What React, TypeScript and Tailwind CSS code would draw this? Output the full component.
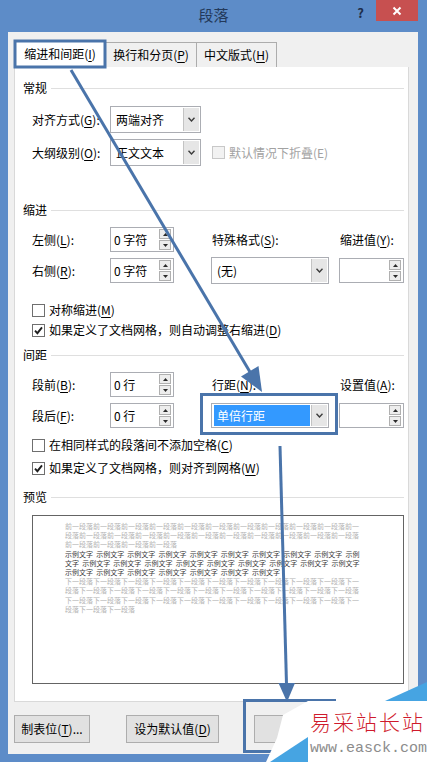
import type { ReactNode } from "react";

// accelerator key, e.g. (G) with the letter underlined
function Acc({ k }: { k: string }) {
  return (
    <>
      (<span className="underline underline-offset-2">{k}</span>)
    </>
  );
}

function Section({ title }: { title: string }) {
  return (
    <div className="flex items-center gap-[4px] h-4">
      <span className="leading-4">{title}</span>
      <div className="flex-1 h-px bg-[#dfdfdf]" />
    </div>
  );
}

function Check({ checked = false, disabled = false }: { checked?: boolean; disabled?: boolean }) {
  return (
    <span
      className={
        disabled
          ? "w-[13px] h-[13px] shrink-0 border border-[#c8c8c8] bg-[#f2f2f2] flex items-center justify-center"
          : "w-[13px] h-[13px] shrink-0 border border-[#6f6f6f] bg-white flex items-center justify-center"
      }
    >
      {checked && (
        <svg width="9" height="9" viewBox="0 0 9 9">
          <path d="M1 4.6 L3.4 7.2 L8 1.4" stroke="#1f1f1f" strokeWidth="1.9" fill="none" />
        </svg>
      )}
    </span>
  );
}

function Chevron() {
  return (
    <svg width="7" height="5" viewBox="0 0 7 5">
      <path d="M0.5 0.8 L3.5 4 L6.5 0.8" stroke="#3c3c3c" strokeWidth="1.4" fill="none" />
    </svg>
  );
}

function Combo({ value, w, selected = false, h = "h-[27px]" }: { value: string; w: string; selected?: boolean; h?: string }) {
  return (
    <div className={`${w} ${h} shrink-0 bg-white border border-[#abadb3] flex p-px`}>
      <div className="flex-1 flex items-center pl-px pr-px">
        <span
          className={
            selected
              ? "h-full w-full flex items-center pl-[3px] bg-[#3399ff] text-white"
              : "h-full w-full flex items-center pl-[3px]"
          }
        >
          {value}
        </span>
      </div>
      <div className="w-[16px] bg-[#e6e6e6] border-l border-[#c3c3c3] flex items-center justify-center">
        <Chevron />
      </div>
    </div>
  );
}

function Spin({ value, w }: { value: string; w: string }) {
  return (
    <div className={`${w} h-[25px] shrink-0 bg-white border border-[#abadb3] flex items-center justify-between pl-[3px] pr-[2px]`}>
      <span>{value}</span>
      <div className="flex flex-col gap-px">
        <span className="w-[12px] h-[10px] border border-[#b0b0b0] bg-[#ededed] flex items-center justify-center">
          <svg width="5" height="3" viewBox="0 0 5 3">
            <path d="M0 3 L2.5 0 L5 3Z" fill="#2a2a2a" />
          </svg>
        </span>
        <span className="w-[12px] h-[10px] border border-[#b0b0b0] bg-[#ededed] flex items-center justify-center">
          <svg width="5" height="3" viewBox="0 0 5 3">
            <path d="M0 0 L2.5 3 L5 0Z" fill="#2a2a2a" />
          </svg>
        </span>
      </div>
    </div>
  );
}

function Label({ w, children }: { w: string; children: ReactNode }) {
  return <span className={`${w} shrink-0 text-black`}>{children}</span>;
}

function Gap({ w }: { w: string }) {
  return <span className={`${w} shrink-0`} />;
}

function Btn({ w, children }: { w: string; children: ReactNode }) {
  return (
    <div className={`${w} h-[28px] shrink-0 border border-[#adadad] bg-[#e1e1e1] flex items-center justify-center`}>
      {children}
    </div>
  );
}

const before = "前一段落".repeat(25);
const sample = "示例文字 ".repeat(26).trim();
const after = "下一段落".repeat(34);

export default function App() {
  return (
    <div className="relative w-[427px] h-[762px] overflow-hidden bg-[#5d8cc8] text-[12px] leading-4 text-black font-[family-name:'Noto_Sans_CJK_SC',sans-serif]">
      {/* title bar */}
      <div className="h-[32px] grid grid-cols-[1fr_auto_1fr]">
        <div />
        <div className="flex items-center text-[15px] text-[#23395a] pb-[2px]">段落</div>
        <div className="flex justify-end items-start">
          <span className="mt-[5px] mr-[12px] text-[13px] font-bold text-[#1d2e4b]">?</span>
          <div className="w-[42px] h-[21px] mr-[9px] bg-[#c75050] flex items-center justify-center">
            <svg width="10" height="10" viewBox="0 0 10 10">
              <path d="M1.5 1.5 L8.5 8.5 M8.5 1.5 L1.5 8.5" stroke="#fff" strokeWidth="2" />
            </svg>
          </div>
        </div>
      </div>

      {/* dialog body */}
      <div className="ml-[8px] w-[410px] h-[722px] bg-[#f0f0f0] pt-[8px] pl-[6px] pr-[9px] flex flex-col">
        <div className="flex items-end h-[27px]">
          <div className="w-[92px] h-[27px] bg-white border border-b-0 border-[#d9d9d9] flex items-center justify-center">
            缩进和间距<Acc k="I" />
          </div>
          <div className="w-[91px] h-[25px] bg-[#f0f0f0] border border-b-0 border-l-0 border-[#acacac] flex items-center justify-center">
            换行和分页<Acc k="P" />
          </div>
          <div className="w-[80px] h-[25px] bg-[#f0f0f0] border border-b-0 border-l-0 border-[#acacac] flex items-center justify-center">
            中文版式<Acc k="H" />
          </div>
        </div>

        <div className="h-[635px] bg-white border border-t-0 border-[#d9d9d9] pl-[8px] pr-[4px] pt-[13px]">
          <Section title="常规" />
          <div className="ml-[9px]">
            <div className="mt-[10px] h-[27px] flex items-center">
              <Label w="w-[78px]">对齐方式<Acc k="G" />:</Label>
              <Combo value="两端对齐" w="w-[91px]" />
            </div>
            <div className="mt-[6px] h-[27px] flex items-center">
              <Label w="w-[78px]">大纲级别<Acc k="O" />:</Label>
              <Combo value="正文文本" w="w-[91px]" />
              <Gap w="w-[11px]" />
              <Check disabled />
              <span className="ml-[4px] text-[#a2a2a2]">默认情况下折叠(E)</span>
            </div>
          </div>

          <div className="mt-[36px]">
            <Section title="缩进" />
          </div>
          <div className="ml-[9px]">
            <div className="mt-[9px] h-[25px] flex items-center">
              <Label w="w-[78px]">左侧<Acc k="L" />:</Label>
              <Spin value="0 字符" w="w-[64px]" />
              <Gap w="w-[38px]" />
              <Label w="w-[117px]">特殊格式<Acc k="S" />:</Label>
              <Gap w="w-[11px]" />
              <Label w="w-[65px]">缩进值<Acc k="Y" />:</Label>
            </div>
            <div className="mt-[5px] h-[27px] flex items-center">
              <Label w="w-[78px]">右侧<Acc k="R" />:</Label>
              <Spin value="0 字符" w="w-[64px]" />
              <Gap w="w-[37px]" />
              <Combo value="(无)" w="w-[118px]" />
              <Gap w="w-[10px]" />
              <Spin value="" w="w-[65px]" />
            </div>
            <div className="mt-[18px] h-4 flex items-center gap-[4px]">
              <Check />
              <span>
                对称缩进<Acc k="M" />
              </span>
            </div>
            <div className="mt-[4px] h-4 flex items-center gap-[4px]">
              <Check checked />
              <span>
                如果定义了文档网格，则自动调整右缩进<Acc k="D" />
              </span>
            </div>
          </div>

          <div className="mt-[9px]">
            <Section title="间距" />
          </div>
          <div className="ml-[9px]">
            <div className="mt-[9px] h-[25px] flex items-center">
              <Label w="w-[78px]">段前<Acc k="B" />:</Label>
              <Spin value="0 行" w="w-[64px]" />
              <Gap w="w-[38px]" />
              <Label w="w-[117px]">行距<Acc k="N" />:</Label>
              <Gap w="w-[11px]" />
              <Label w="w-[65px]">设置值<Acc k="A" />:</Label>
            </div>
            <div className="mt-[6px] h-[25px] flex items-center">
              <Label w="w-[78px]">段后<Acc k="F" />:</Label>
              <Spin value="0 行" w="w-[64px]" />
              <Gap w="w-[37px]" />
              <Combo value="单倍行距" w="w-[118px]" h="h-[25px]" selected />
              <Gap w="w-[10px]" />
              <Spin value="" w="w-[65px]" />
            </div>
            <div className="mt-[9px] h-4 flex items-center gap-[4px]">
              <Check />
              <span>
                在相同样式的段落间不添加空格<Acc k="C" />
              </span>
            </div>
            <div className="mt-[7px] h-4 flex items-center gap-[4px]">
              <Check checked />
              <span>
                如果定义了文档网格，则对齐到网格<Acc k="W" />
              </span>
            </div>
          </div>

          <div className="mt-[13px]">
            <Section title="预览" />
          </div>
          <div className="mt-[10px] ml-[9px] w-[372px] h-[169px] border border-[#646464] pt-[6px] pl-[32px]">
            <div className="w-[296px] text-[7px] leading-[9.2px] break-all">
              <p className="text-[#b3b3b3]">{before}</p>
              <p className="text-[#3a3a3a] [word-spacing:1.6px]">{sample}</p>
              <p className="text-[#b3b3b3]">{after}</p>
            </div>
          </div>
        </div>

        <div className="mt-[13px] flex">
          <Btn w="w-[76px]">
            制表位<Acc k="T" />...
          </Btn>
          <Gap w="w-[36px]" />
          <Btn w="w-[93px]">
            设为默认值<Acc k="D" />
          </Btn>
          <Gap w="w-[35px]" />
          <div className="w-[72px] h-[28px] shrink-0 border border-[#adadad] bg-[#e1e1e1] flex items-center pl-[26px]">
            确定
          </div>
        </div>
      </div>

      {/* callout boxes and arrows drawn on top of the dialog */}
      <svg className="absolute left-0 top-0 pointer-events-none" width="427" height="762" viewBox="0 0 427 762">
        <g fill="none" stroke="#4a74aa" strokeWidth="3">
          <rect x="15" y="41" width="90" height="26" />
          <rect x="201.5" y="394.5" width="135" height="39" />
          <rect x="244.5" y="700.5" width="90" height="51" />
          <line x1="71" y1="70" x2="250" y2="372" />
          <line x1="280" y1="446" x2="286.5" y2="684" />
        </g>
        <g fill="#4a74aa">
          <polygon points="262,392 241,376.5 258.5,366" />
          <polygon points="287,702 278.5,683 295,683" />
        </g>
      </svg>

      {/* site watermark in the corner */}
      <svg className="absolute left-0 top-0 pointer-events-none" width="427" height="762" viewBox="0 0 427 762">
        <polygon points="308,701 427,701 427,762 266,762 277,738 283,715" fill="#ffffff" />
        <polygon points="385,701 427,682 427,701" fill="#46a4e2" />
        <polygon points="270,762 308,737 308,762" fill="#46a4e2" />
      </svg>
      <span className="absolute left-[310px] top-[707px] whitespace-nowrap text-[21px] leading-[28px] tracking-[2px] text-[#cf1a2c] font-light">
        易采站长站
      </span>
      <span className="absolute left-[310px] top-[740px] whitespace-nowrap text-[15px] leading-[18px] text-[#8c8c8c] font-[family-name:'Liberation_Mono',monospace]">
        www.easck.com
      </span>
    </div>
  );
}
